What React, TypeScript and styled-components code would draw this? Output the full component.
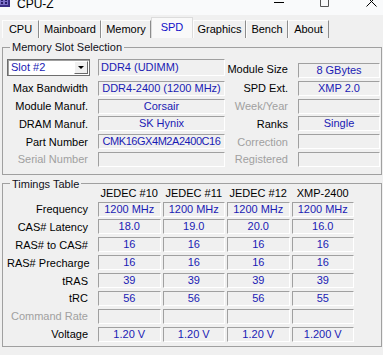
import React from 'react';
import styled, { createGlobalStyle } from 'styled-components';

const GlobalStyle = createGlobalStyle`
  html, body {
    margin: 0;
    padding: 0;
    background: #f0f0f0;
  }
  body {
    font-family: "Liberation Sans", Arial, sans-serif;
    font-size: 11px;
    color: #000;
  }
`;

const VALUE_BLUE = '#1a1ab4';

const Window = styled.div`
  width: 383px;
  height: 355px;
  overflow: hidden;
  background: #f0f0f0;
  display: flex;
  flex-direction: column;
`;

const TitleBar = styled.div`
  flex: none;
  height: 15px;
  display: flex;
  align-items: flex-start;
  background: #f9fafb;
  overflow: hidden;
`;

const AppIcon = styled.svg`
  flex: none;
  margin: -4px 0 0 -2px;
`;

const TitleText = styled.div`
  flex: 1;
  margin: -4px 0 0 7px;
  font-size: 12px;
  line-height: 16px;
  color: #000;
`;

const CaptionButton = styled.div`
  flex: none;
  width: 46px;
  display: flex;
  justify-content: center;
  &:last-child {
    margin-right: -11px;
  }
`;

const TabRow = styled.div`
  flex: none;
  height: 23px;
  display: flex;
  align-items: flex-end;
  padding-left: 2px;
`;

const Tab = styled.div<{ $w: number; $active?: boolean }>`
  box-sizing: border-box;
  width: ${(p) => p.$w}px;
  height: ${(p) => (p.$active ? 21 : 18)}px;
  text-align: center;
  line-height: ${(p) => (p.$active ? 19 : 16)}px;
  color: ${(p) => (p.$active ? '#1010c8' : '#000')};
  background: ${(p) => (p.$active ? '#f9f9f9' : '#f0f0f0')};
  border-top: 1px solid ${(p) => (p.$active ? '#dcdcdc' : '#fdfdfd')};
  border-left: 1px solid ${(p) => (p.$active ? '#dcdcdc' : '#fdfdfd')};
  border-right: 1px solid ${(p) => (p.$active ? '#dcdcdc' : '#8c8c8c')};
`;

const Panel = styled.div`
  flex: 1;
  display: flex;
  flex-direction: column;
`;

const Group = styled.fieldset<{ $top: number }>`
  box-sizing: border-box;
  width: 380px;
  margin: ${(p) => p.$top}px 0 0 2px;
  padding: 0 1px 0 4px;
  border: 1px solid #a0a0a0;
  min-width: 0;
`;

const Legend = styled.legend`
  margin-left: 3px;
  padding: 0 2px;
  line-height: 10px;
  color: #101020;
`;

const SlotGrid = styled.div`
  display: grid;
  grid-template-columns: 91px 127px 73px 82px;
  grid-template-rows: 19.3px repeat(5, 15px);
  row-gap: 2.7px;
  padding: 7px 0 7px 0;
`;

const Label = styled.div<{ $disabled?: boolean }>`
  align-self: center;
  text-align: right;
  padding-right: 10px;
  white-space: nowrap;
  color: ${(p) => (p.$disabled ? '#a0a0a0' : '#000')};
`;

const RowLabel = styled(Label)`
  padding-right: 8px;
`;

const ValueBox = styled.div<{ $left?: boolean; $tall?: boolean; $tight?: boolean }>`
  box-sizing: border-box;
  height: ${(p) => (p.$tall ? 17 : 15)}px;
  align-self: ${(p) => (p.$tall ? 'start' : 'end')};
  border-top: 1px solid #a0a0a0;
  border-left: 1px solid #a0a0a0;
  border-bottom: 1px solid #fff;
  border-right: 1px solid #fff;
  color: ${VALUE_BLUE};
  text-align: ${(p) => (p.$left ? 'left' : 'center')};
  padding-left: ${(p) => (p.$left ? 2 : 0)}px;
  line-height: ${(p) => (p.$tall ? 15 : 13)}px;
  letter-spacing: ${(p) => (p.$tight ? '-0.45px' : 'normal')};
  white-space: nowrap;
  overflow: hidden;
`;

const Combo = styled.div`
  box-sizing: border-box;
  width: 83px;
  height: 17px;
  align-self: start;
  display: flex;
  align-items: center;
  background: #fff;
  border: 1px solid #6e6e6e;
  box-shadow: inset 1px 1px 0 #a0a0a0;
  color: ${VALUE_BLUE};
  padding: 0 1px 0 3px;
`;

const ComboText = styled.span`
  flex: 1;
  line-height: 15px;
`;

const ComboButton = styled.div`
  box-sizing: border-box;
  width: 14px;
  height: 13px;
  background: #f0f0f0;
  border-top: 1px solid #fff;
  border-left: 1px solid #fff;
  border-right: 1px solid #696969;
  border-bottom: 1px solid #696969;
  display: flex;
  align-items: center;
  justify-content: center;
  &::after {
    content: '';
    border-left: 3px solid transparent;
    border-right: 3px solid transparent;
    border-top: 3px solid #000;
  }
`;

const TimingGrid = styled.div`
  display: grid;
  grid-template-columns: 89px repeat(4, 62.5px);
  grid-template-rows: 10px repeat(8, 15px);
  column-gap: 2px;
  row-gap: 2.86px;
  padding: 0 0 4px 0;
`;

const ColHead = styled.div`
  text-align: center;
  line-height: 11px;
  white-space: nowrap;
  margin-top: -1px;
`;

const slotRows: [string, string, boolean, string, string, boolean][] = [
  ['Max Bandwidth', 'DDR4-2400 (1200 MHz)', false, 'SPD Ext.', 'XMP 2.0', false],
  ['Module Manuf.', 'Corsair', false, 'Week/Year', '', true],
  ['DRAM Manuf.', 'SK Hynix', false, 'Ranks', 'Single', false],
  ['Part Number', 'CMK16GX4M2A2400C16', false, 'Correction', '', true],
  ['Serial Number', '', true, 'Registered', '', true],
];

const timingRows: [string, string[], boolean?][] = [
  ['Frequency', ['1200 MHz', '1200 MHz', '1200 MHz', '1200 MHz']],
  ['CAS# Latency', ['18.0', '19.0', '20.0', '16.0']],
  ['RAS# to CAS#', ['16', '16', '16', '16']],
  ['RAS# Precharge', ['16', '16', '16', '16']],
  ['tRAS', ['39', '39', '39', '39']],
  ['tRC', ['56', '56', '56', '55']],
  ['Command Rate', ['', '', '', ''], true],
  ['Voltage', ['1.20 V', '1.20 V', '1.20 V', '1.200 V']],
];

const tabs: [string, number][] = [
  ['CPU', 37],
  ['Mainboard', 62],
  ['Memory', 50],
  ['SPD', 42],
  ['Graphics', 53],
  ['Bench', 42],
  ['About', 41],
];

export default function App() {
  return (
    <>
      <GlobalStyle />
      <Window>
        <TitleBar>
          <AppIcon width="12" height="11" viewBox="0 0 12 11">
            <rect x="0" y="0" width="12" height="11" fill="#3b2d86" />
            <rect x="2" y="2" width="8" height="7" fill="#7d70c8" />
            <path d="M3 3h2v2H3zM7 3h2v2H7zM3 6h2v2H3zM7 6h2v2H7z" fill="#2a1f6a" />
          </AppIcon>
          <TitleText>CPU-Z</TitleText>
          <CaptionButton>
            <svg width="10" height="4" viewBox="0 0 10 4">
              <rect x="0" y="2" width="10" height="1" fill="#000" />
            </svg>
          </CaptionButton>
          <CaptionButton>
            <svg width="10" height="7" viewBox="0 0 10 7">
              <path d="M0.5 -3 V6.5 H8.5 V-3" fill="none" stroke="#555" strokeWidth="1" />
            </svg>
          </CaptionButton>
          <CaptionButton>
            <svg width="11" height="7" viewBox="0 0 11 7">
              <path d="M0.5 -3.5 L10.5 6.5 M10.5 -3.5 L0.5 6.5" stroke="#000" strokeWidth="1" />
            </svg>
          </CaptionButton>
        </TitleBar>

        <TabRow>
          {tabs.map(([name, w]) => (
            <Tab key={name} $w={w} $active={name === 'SPD'}>
              {name}
            </Tab>
          ))}
        </TabRow>

        <Panel>
          <Group $top={4}>
            <Legend>Memory Slot Selection</Legend>
            <SlotGrid>
              <Combo>
                <ComboText>Slot #2</ComboText>
                <ComboButton />
              </Combo>
              <ValueBox $left $tall>DDR4 (UDIMM)</ValueBox>
              <Label>Module Size</Label>
              <ValueBox>8 GBytes</ValueBox>
              {slotRows.map(([l1, v1, d1, l2, v2, d2]) => (
                <React.Fragment key={l1}>
                  <Label $disabled={d1}>{l1}</Label>
                  <ValueBox $tight={l1 === 'Part Number'}>{v1}</ValueBox>
                  <Label $disabled={d2}>{l2}</Label>
                  <ValueBox>{v2}</ValueBox>
                </React.Fragment>
              ))}
            </SlotGrid>
          </Group>

          <Group $top={4}>
            <Legend>Timings Table</Legend>
            <TimingGrid>
              <div />
              <ColHead>JEDEC #10</ColHead>
              <ColHead>JEDEC #11</ColHead>
              <ColHead>JEDEC #12</ColHead>
              <ColHead>XMP-2400</ColHead>
              {timingRows.map(([label, vals, disabled]) => (
                <React.Fragment key={label}>
                  <RowLabel $disabled={disabled}>{label}</RowLabel>
                  {vals.map((v, i) => (
                    <ValueBox key={i}>{v}</ValueBox>
                  ))}
                </React.Fragment>
              ))}
            </TimingGrid>
          </Group>
        </Panel>
      </Window>
    </>
  );
}
